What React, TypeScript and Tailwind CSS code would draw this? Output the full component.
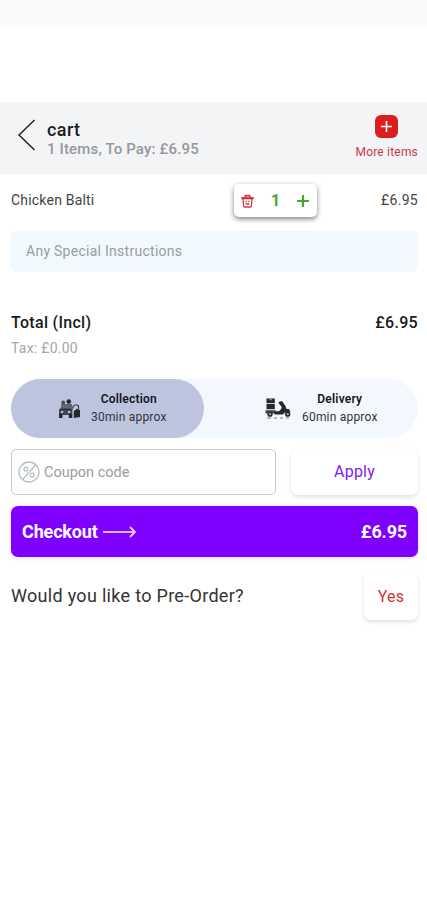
import React from "react";

const cart = {
    itemCount: 1,
    total: "£6.95",
    tax: "£0.00",
};

function BackIcon() {
    return (
        <svg width="18" height="32" viewBox="0 0 18 32" fill="none" stroke="#222" strokeWidth="1.5">
            <path d="M16.5 1 L1 16 L16.5 31" />
        </svg>
    );
}

function TrashIcon() {
    return (
        <svg width="13" height="14" viewBox="0 0 13 14" fill="none" stroke="#cb3840" strokeWidth="1.3">
            <path d="M0.3 4.2 H12.7" strokeWidth="2.2" />
            <path d="M3.6 3.5 L4.6 1.6 H8.4 L9.4 3.5" strokeWidth="1.6" />
            <path d="M2 4.5 L2.6 12 Q2.7 13 3.7 13 H9.3 Q10.3 13 10.4 12 L11 4.5" />
            <path d="M4.4 7.5 H5.8 M7.2 7.5 H8.6 M4.6 10 H8.4" />
        </svg>
    );
}

function CollectionIcon() {
    return (
        <svg width="23" height="20" viewBox="0 0 23 20" fill="#25272e">
            <circle cx="5.2" cy="3.4" r="2" opacity="0.75" />
            <circle cx="10.8" cy="2.6" r="2.3" />
            <path d="M3.5 5 H14 L15 11 H2.2 Z" opacity="0.6" />
            <path d="M1 11 Q1 9.5 2.5 9.5 H12.5 Q14.3 9.5 14.3 11.5 V16 H1 Z" opacity="0.8" />
            <path d="M1 15 H4.5 V19 H1 Z M10.8 15 H14.3 V19 H10.8 Z" />
            <path d="M3 12 H5.2 V14 H3 Z M10 12 H12.2 V14 H10 Z" fill="#bdc5de" />
            <path d="M15 9.5 V7.5 Q17.5 4.5 20.5 6.5 V10" fill="none" stroke="#25272e" strokeWidth="1" />
            <path d="M15.8 12 L19 9.8 L22 11 V18 L15.8 19 Z" />
        </svg>
    );
}

function DeliveryIcon() {
    return (
        <svg width="26" height="21" viewBox="0 0 26 21" fill="#25292d">
            <path d="M1.5 0.5 H9.8 V5 H1.5 Z" />
            <path d="M4.5 0.5 H6.8 V2.2 H4.5 Z" fill="#8d9397" />
            <path d="M1.5 5.8 H9.8 V11.2 H1.5 Z" />
            <path d="M0.5 12.2 H10.5 V15.5 H0.5 Z" opacity="0.85" />
            <path d="M13.5 4 L17 3 L20.5 8 L21.5 11 H24 L25.5 14.5 H20 L18 16.5 H9.5 V13.2 H14 L16.5 10.5 V8.5 L14.5 6.5 Z" />
            <circle cx="5" cy="16.2" r="1.9" fill="#a7adb1" stroke="#25292d" strokeWidth="1.5" />
            <circle cx="22.7" cy="16.2" r="1.9" fill="#a7adb1" stroke="#25292d" strokeWidth="1.5" />
            <path d="M2 20 H6 M9 20 H12 M15 20 H18 M21 20 H24" stroke="#25292d" strokeWidth="0.9" opacity="0.65" />
        </svg>
    );
}

function PercentIcon() {
    return (
        <svg width="22" height="22" viewBox="0 0 22 22" fill="none" stroke="#b4bec6" strokeWidth="1.3">
            <circle cx="11" cy="11" r="10" />
            <path d="M17.5 4 L5 18" />
            <circle cx="7.8" cy="8" r="1.9" />
            <circle cx="14.2" cy="14" r="1.9" />
        </svg>
    );
}

function ArrowIcon() {
    return (
        <svg width="34" height="12" viewBox="0 0 34 12" fill="none" stroke="#e6cbff" strokeWidth="1.8">
            <path d="M0 6 H32" />
            <path d="M27 1 L32 6 L27 11" />
        </svg>
    );
}

interface OrderTypeProps {
    icon: React.ReactNode;
    title: string;
    time: string;
    className: string;
}

function OrderType({ icon, title, time, className }: OrderTypeProps) {
    return (
        <button className={`flex h-full items-center rounded-full ${className}`}>
            {icon}
            <span className="flex flex-col items-center pb-[2px] text-[12px] leading-[18px] text-[#30333a]">
                <span className="font-semibold tracking-[0.2px] text-[#15171c]">{title}</span>
                <span className="tracking-[0.2px]">{time}</span>
            </span>
        </button>
    );
}

export default function App() {
    return (
        <div className="h-[900px] w-[427px] overflow-hidden bg-white font-['Roboto',sans-serif] text-[#222]">
            <div className="h-[25px] bg-[#fafafa]" />

            <header className="mt-[77px] flex h-[72px] items-start justify-between bg-[#f3f4f6] pr-[9px] pl-[18px]">
                <div className="flex pt-[17px]">
                    <BackIcon />
                    <div className="ml-[11px]">
                        <h1 className="text-[18px] leading-[21px] font-medium tracking-[0.4px] text-[#1c1c1e]">cart</h1>
                        <p className="text-[15px] leading-[18px] font-medium tracking-[0.15px] text-[#96989c]">
                            {cart.itemCount} Items, To Pay: {cart.total}
                        </p>
                    </div>
                </div>
                <button className="flex flex-col items-center pt-[13px]">
                    <svg width="23" height="23" viewBox="0 0 23 23">
                        <rect width="23" height="23" rx="6" fill="#d91f1f" />
                        <path d="M11.5 6 V17 M6 11.5 H17" stroke="#fff" strokeWidth="1.6" />
                    </svg>
                    <span className="mt-[6px] text-[12px] leading-[16px] tracking-[0.2px] text-[#cc3a45]">More items</span>
                </button>
            </header>

            <main className="pr-[9px] pl-[11px]">
                {/* Item row: name, stepper, price */}
                <div className="flex h-[57px] pt-[10px]">
                    <span className="w-[223px] text-[14px] leading-[33px] tracking-[0.2px] text-[#444]">Chicken Balti</span>
                    <div className="flex h-[33px] w-[83px] items-center justify-between rounded-[5px] bg-white pr-[8px] pl-[7px] shadow-[0_2px_5px_rgba(0,0,0,0.5)]">
                        <TrashIcon />
                        <span className="text-[16px] leading-none font-bold text-[#46a52d]">1</span>
                        <svg width="12" height="12" viewBox="0 0 12 12" stroke="#46a52d" strokeWidth="2.2">
                            <path d="M6 0 V12 M0 6 H12" />
                        </svg>
                    </div>
                    <span className="ml-auto text-[14px] leading-[33px] tracking-[0.3px] text-[#444]">{cart.total}</span>
                </div>
                <div className="h-[41px] rounded-[5px] bg-[#f2f8ff] pl-[15px] text-[14px] leading-[41px] tracking-[0.27px] text-[#999ca0]">
                    Any Special Instructions
                </div>

                {/* Totals */}
                <div className="mt-[41px] flex items-center justify-between text-[16px] leading-[20px] font-medium tracking-[0.3px] text-[#1a1a1a]">
                    <span>Total (Incl)</span>
                    <span>{cart.total}</span>
                </div>
                <div className="mt-[6px] text-[14px] leading-[18px] tracking-[0.25px] text-[#a5a6a9]">Tax: {cart.tax}</div>

                {/* Collection / delivery switch */}
                <div className="mt-[22px] flex h-[59px] rounded-full bg-[#f3f8fe]">
                    <OrderType
                        icon={<CollectionIcon />}
                        title="Collection"
                        time="30min approx"
                        className="w-[193px] gap-[10px] bg-[#bdc5de] pl-[47px]"
                    />
                    <OrderType
                        icon={<DeliveryIcon />}
                        title="Delivery"
                        time="60min approx"
                        className="w-[214px] gap-[11px] pl-[61px]"
                    />
                </div>

                <div className="mt-[11px] flex h-[46px] justify-between">
                    <div className="flex w-[265px] items-center gap-[4px] rounded-[5px] border border-[#c9c9c9] pl-[6px] text-[14.5px] text-[#9b9b9b]">
                        <PercentIcon />
                        <span className="pt-px">Coupon code</span>
                    </div>
                    <button className="w-[127px] rounded-[7px] bg-white text-[16px] tracking-[0.2px] text-[#7d22f2] shadow-[0_2px_4px_rgba(0,0,0,0.12)]">
                        Apply
                    </button>
                </div>

                <button className="mt-[11px] flex h-[51px] w-full items-center rounded-[7px] bg-[#8000ff] px-[11px] text-[18px] font-bold tracking-[-0.15px] text-white shadow-[0_1px_4px_rgba(0,0,0,0.15)]">
                    Checkout
                    <span className="ml-[5px]">
                        <ArrowIcon />
                    </span>
                    <span className="ml-auto">{cart.total}</span>
                </button>

                <div className="mt-[16px] flex h-[47px] items-center justify-between">
                    <span className="pb-[2px] text-[18px] tracking-[0.3px] text-[#333]">Would you like to Pre-Order?</span>
                    <button className="h-full w-[54px] rounded-[7px] bg-white text-[16px] tracking-[0.3px] text-[#d6332e] shadow-[0_2px_4px_rgba(0,0,0,0.13)]">
                        Yes
                    </button>
                </div>
            </main>
        </div>
    );
}
